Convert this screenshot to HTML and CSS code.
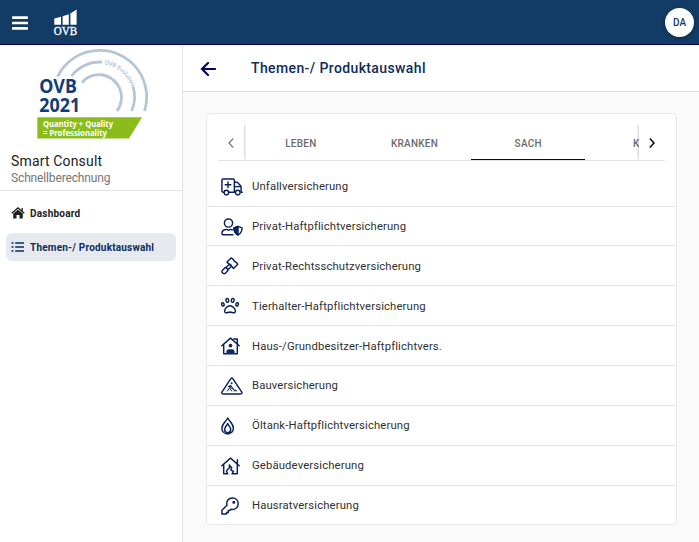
FILE: index.html
```html
<!DOCTYPE html>
<html lang="de">
<head>
<meta charset="utf-8">
<title>Themen-/ Produktauswahl</title>
<link rel="stylesheet" href="styles.css">
</head>
<body>
<header class="topbar">
  <svg class="menu" viewBox="0 0 16 14"><path d="M1 1.6h14M1 7h14M1 12.4h14"/></svg>
  <svg class="brand" viewBox="0 0 24 28"><path d="M.3 9.5 7 7.7v8.1H.3zM8.6 7.2l6.2-2v10.6H8.6zM16.4 4.4 22.6.5v15.3h-6.2z"/><text x="-.3" y="26" textLength="23.3" lengthAdjust="spacingAndGlyphs">OVB</text></svg>
  <div class="avatar">DA</div>
</header>
<div class="shell">
  <aside class="sidebar">
    <svg class="seal" viewBox="36 46 114 94">
      <g class="arcs"><path d="M57.7 76.3A46.6 46.6 0 0 1 99.5 50.4A46.6 46.6 0 0 1 144.5 111"/><path d="M71.5 76A35 35 0 0 1 102 62.1M133 86.5A35 35 0 0 1 131.6 111"/><path d="M82 82.5A22.8 22.8 0 0 1 99.5 74.6A22.8 22.8 0 0 1 117 111"/></g>
      <path id="curve" d="M104.5 64.2A33.2 33.2 0 0 1 132.7 97" fill="none"/>
      <text class="seal-small"><textPath href="#curve">OVB Evolution</textPath></text>
      <text class="seal-big" x="39.3" y="93" textLength="37.5" lengthAdjust="spacingAndGlyphs">OVB</text>
      <text class="seal-big" x="39.3" y="111.5" textLength="41" lengthAdjust="spacingAndGlyphs">2021</text>
      <path class="ribbon" d="M37.3 117.2H142L129 138.5H37.3z"/>
      <text class="seal-text" x="43" y="127" textLength="70" lengthAdjust="spacingAndGlyphs">Quantity + Quality</text>
      <text class="seal-text" x="43" y="135.8" textLength="64" lengthAdjust="spacingAndGlyphs">= Professionality</text>
    </svg>
    <div class="product">Smart Consult</div>
    <div class="subtitle">Schnellberechnung</div>
    <nav class="nav">
      <a class="nav-item"><svg class="nav-icon" viewBox="0 0 14 12"><path d="M.7 6.2 7 .9l6.3 5.3M11.2 1v3" fill="none" stroke="currentColor" stroke-width="1.3"/><path d="M2.2 6.6 7 2.7l4.8 3.9v5H8.5V8h-3v3.6H2.2z"/></svg><span class="nav-home">Dashboard</span></a>
      <a class="nav-item active"><svg class="nav-icon" viewBox="0 0 14 12"><path d="M4.2 1.9H13M4.2 6H13M4.2 10.1H13M.5 1.9h2M.5 6h2M.5 10.1h2" fill="none" stroke="currentColor" stroke-width="1.5"/></svg><span class="nav-products">Themen-/ Produktauswahl</span></a>
    </nav>
  </aside>
  <main class="main">
    <div class="page-head">
      <svg class="back" viewBox="0 0 16 14"><path d="M8 1 2 7l6 6M2 7h13"/></svg>
      <h1>Themen-/ Produktauswahl</h1>
    </div>
    <section class="card">
      <div class="tabs">
        <div class="scroll prev"><svg viewBox="0 0 8 12"><path d="M6.2 1.5 2 6l4.2 4.5"/></svg></div>
        <div class="tab-list"><div class="tab">LEBEN</div><div class="tab">KRANKEN</div><div class="tab selected">SACH</div><div class="tab">KFZ</div></div>
        <div class="scroll next"><svg viewBox="0 0 8 12"><path d="M1.8 1.5 6 6l-4.2 4.5"/></svg></div>
      </div>
      <ul class="list">
        <li><svg class="icon" viewBox="0 0 22 18"><path d="M3 14.2H2A1.2 1.2 0 0 1 .9 13V2.2A1.2 1.2 0 0 1 2 1h10.2a1.2 1.2 0 0 1 1.2 1.2v12H8M13.4 4.3h2.3q.8 0 1.3.6l2.6 2.8q.5.5.5 1.2v5.3M13.4 8.6h6.5M20 14.2h1.2M7 4v5.6M4.2 6.8h5.6"/><circle cx="5.4" cy="14.6" r="2.3"/><circle cx="16.8" cy="14.6" r="2.3"/></svg><span>Unfallversicherung</span></li>
        <li><svg class="icon" viewBox="0 0 22 18"><circle cx="7.5" cy="5" r="4.1"/><path d="M12 16.8H1.9q-1 0-1-1.1c0-2.9 1.9-4.3 4.5-4.3 1.4.7 2.9.7 4.3 0q1 0 1.8.4M17 8.4l4 1.5q.2 5-4 7-4.2-2-4-7z"/><path class="solid" d="m17 8.4-4 1.5q-.2 5 4 7z"/></svg><span>Privat-Haftpflichtversicherung</span></li>
        <li><svg class="icon" viewBox="0 0 22 18"><path d="m6 5 4.1-4.1 1.6 1q1.5 2.7 4.3 4.1l.7 1.3-4.1 4.1-1.1-1.2Q10.2 7.4 7 6.2zM8.5 7.2l2 2-3.9 3.9M8.5 7.2 5.4 10.3M4.7 10.3l2.1 2.1q.5.8-.1 1.4l-2.6 2.6q-1 .7-2 0l-.8-.8q-.8-1 0-2l2.5-2.7q.5-.4.9-.6z"/></svg><span>Privat-Rechtsschutzversicherung</span></li>
        <li><svg class="icon" viewBox="0 0 22 18"><ellipse cx="1.9" cy="7.4" rx="1.2" ry="1.7" transform="rotate(-18 1.9 7.4)"/><ellipse cx="6.3" cy="3.4" rx="1.4" ry="1.9" transform="rotate(-12 6.3 3.4)"/><ellipse cx="11.7" cy="3.4" rx="1.4" ry="1.9" transform="rotate(12 11.7 3.4)"/><ellipse cx="16.1" cy="7.4" rx="1.2" ry="1.7" transform="rotate(18 16.1 7.4)"/><path d="M9 8.8c-2.5 0-5.4 2.9-5.4 5.3 0 1.5 1.2 1.8 2.2 1.6l3.2-.7 3.2.7c1 .2 2.2-.1 2.2-1.6 0-2.4-2.9-5.3-5.4-5.3z"/></svg><span>Tierhalter-Haftpflichtversicherung</span></li>
        <li><svg class="icon" viewBox="0 0 22 18"><path d="M.8 8.7 9.5 1.1l8.7 7.6M2.7 7.2v9.6h13.6V7.2M12.8 2h3.5v4.6"/><circle class="mark" cx="9.5" cy="8.6" r="1.9"/><path class="mark" d="M5.4 17v-2.2q0-2.6 2.6-2.6h3q2.6 0 2.6 2.6V17z"/></svg><span>Haus-/Grundbesitzer-Haftpflichtvers.</span></li>
        <li><svg class="icon" viewBox="0 0 22 18"><path d="M9.8 1.7q1-1.4 2 0l9 13.4q.6 1.6-1.1 1.8H2q-1.7-.2-1.1-1.8z"/><circle class="mark" cx="10.6" cy="6.3" r="1"/><path class="fine" d="M7.3 9.5 9.7 8.4l2.6 3.4M9.7 8.4l-1 2.8 1.9 2.8M8.4 11.1 6.4 14M8.3 9.5l4.8 3.6"/><path class="mark" d="m12.3 14.3 1.8-2 2.5 2z"/></svg><span>Bauversicherung</span></li>
        <li><svg class="icon" viewBox="0 0 22 18"><path d="M6.8 1C5.2 4.4.9 6.5.9 11.2c0 3.3 2.5 5.7 5.7 5.7s5.8-2.4 5.8-5.7C12.4 6.5 8.3 4.4 6.8 1zM6.7 6.5c-1 2.3-3.1 3.4-3.1 6 0 1.8 1.3 3.1 3 3.1s3.1-1.3 3.1-3.1c0-2.6-2.1-3.7-3-6z"/></svg><span>Öltank-Haftpflichtversicherung</span></li>
        <li><svg class="icon" viewBox="0 0 22 18"><path d="M.8 8.7 9.5 1.1l8.7 7.6M16.4 2.8v4M2.7 7.2v9.6h4l-1-2q-.3-1 .5-1.8l2.4-2.6-.3-2.4 2.4 2.8-.8 2.2 2.6 1.4-1.4 2.4h5.2V7.2"/></svg><span>Gebäudeversicherung</span></li>
        <li><svg class="icon" viewBox="0 0 22 18"><path d="M6 8.2C4.9 4 7.7 1 11.3 1c3.4 0 5.9 2.4 5.9 5.7 0 4-3.3 6.4-7.2 5.5l-1.3 1.4H7.3v1.8H5.6v1.5H.9v-3.7z"/><circle class="solid" cx="12.8" cy="5.3" r=".8"/></svg><span>Hausratversicherung</span></li>
      </ul>
    </section>
  </main>
</div>
</body>
</html>
```

FILE: styles.css
```css
* { box-sizing: border-box; }
body { margin: 0; width: 699px; height: 542px; overflow: hidden; background: #fafafa; color: #303030; font-family: Roboto, "Noto Sans", sans-serif; }
svg { display: block; flex: none; }
.topbar { height: 45px; display: flex; align-items: center; padding: 0 5px 0 12px; background: #123c66; border-bottom: 1px solid #02025a; }
.menu { width: 16px; height: 14px; margin-top: 2px; fill: none; stroke: #fff; stroke-width: 2.7; stroke-linecap: round; }
.brand { width: 24px; height: 28px; margin: 1px 0 0 26px; fill: #fff; overflow: visible; }
.brand text { font: 400 11.5px "Liberation Serif", serif; stroke: #fff; stroke-width: .3; }
.avatar { width: 29px; height: 29px; margin-left: auto; border-radius: 50%; background: #fff; color: #123c66; display: grid; place-items: center; font-size: 10px; font-weight: 500; box-shadow: 0 1px 4px #0005; }
.shell { display: flex; height: 497px; }
.sidebar { width: 183px; flex: none; background: #fff; border-right: 1px solid #e3e3e3; }
.seal { width: 114px; height: 94px; margin: 1px 0 0 36px; overflow: visible; }
.arcs { fill: none; stroke: #b5c5d6; stroke-width: 2.8; }
.seal-small { font-size: 5.8px; fill: #93a9c0; }
.seal-big { font: 700 19px "Noto Sans", sans-serif; fill: #123c75; }
.ribbon { fill: #8abd1c; }
.seal-text { font: 700 8px "Noto Sans", sans-serif; fill: #fff; }
.product { margin: 12px 0 0 11px; line-height: 19px; font-size: 14px; letter-spacing: .16px; color: #222; }
.subtitle { margin-left: 11px; line-height: 15px; font-size: 12px; letter-spacing: -.14px; color: #757575; }
.nav { margin-top: 4px; padding: 8px 6px; border-top: 1px solid #e3e3e3; display: grid; gap: 6px; }
.nav-item { height: 28px; display: flex; align-items: center; gap: 5px; padding-left: 5px; border-radius: 6px; font-size: 10px; font-weight: 700; color: #202020; }
.nav-item.active { background: #e6eaef; color: #0b2d5f; }
.nav-icon { width: 14px; height: 12px; fill: currentColor; }
.nav-home { letter-spacing: .22px; }
.nav-products { letter-spacing: .2px; }
.main { flex: 1; min-width: 0; }
.page-head { height: 47px; display: flex; align-items: center; padding-left: 17px; background: #fff; border-bottom: 1px solid #dedede; }
.back { width: 16px; height: 14px; margin-top: 1px; fill: none; stroke: #03075a; stroke-width: 2.2; stroke-linecap: round; }
h1 { margin: 0 0 0 35px; font-size: 14px; font-weight: 500; letter-spacing: .38px; color: #0d2c5b; }
.card { width: 471px; height: 412px; margin: 21px 0 0 23px; background: #fff; border: 1px solid #e8e8e8; border-radius: 4px; }
.tabs { display: flex; height: 47px; margin: 0 11px; border-bottom: 1px solid #e4e4e4; }
.scroll { width: 26px; flex: none; display: grid; place-items: center; margin-top: 10px; padding-top: 1px; z-index: 1; background: #fff; }
.scroll svg { width: 8px; height: 12px; fill: none; stroke: #777; stroke-width: 1.2; }
.prev { box-shadow: 2px 0 2px -1px #0003; clip-path: inset(0 -4px 0 0); }
.next { box-shadow: -2px 0 2px -1px #0003; clip-path: inset(0 0 0 -4px); }
.next svg { stroke: #111; stroke-width: 1.6; }
.tab-list { flex: 1; min-width: 0; display: flex; overflow: hidden; }
.tab { width: 113.7px; flex: none; display: grid; place-items: center; padding-top: 13px; font-size: 10px; font-weight: 500; letter-spacing: .25px; color: #6c6c6c; border-bottom: 1px solid transparent; }
.tab:last-child { place-items: center start; padding-left: 48px; }
.tab.selected { border-color: #03034f; }
.list { list-style: none; margin: 5px 0 0; padding: 0; }
.list li { height: 39.85px; display: flex; align-items: center; gap: 9.5px; padding: 1px 0 0 13.5px; border-bottom: 1px solid #e6e6e6; font-size: 11.3px; letter-spacing: .14px; white-space: nowrap; }
.list li:first-child { height: 40.6px; padding-top: 2px; }
.list li:last-child { border-bottom: 0; }
.icon { width: 22px; height: 18px; fill: none; stroke: #0b1f5c; stroke-width: 1.45; stroke-linejoin: round; stroke-linecap: round; }
.icon .solid { fill: #0b2d5f; }
.icon .fine { stroke-width: 1; }
.icon .mark { fill: #0b2d5f; stroke: none; }
```
